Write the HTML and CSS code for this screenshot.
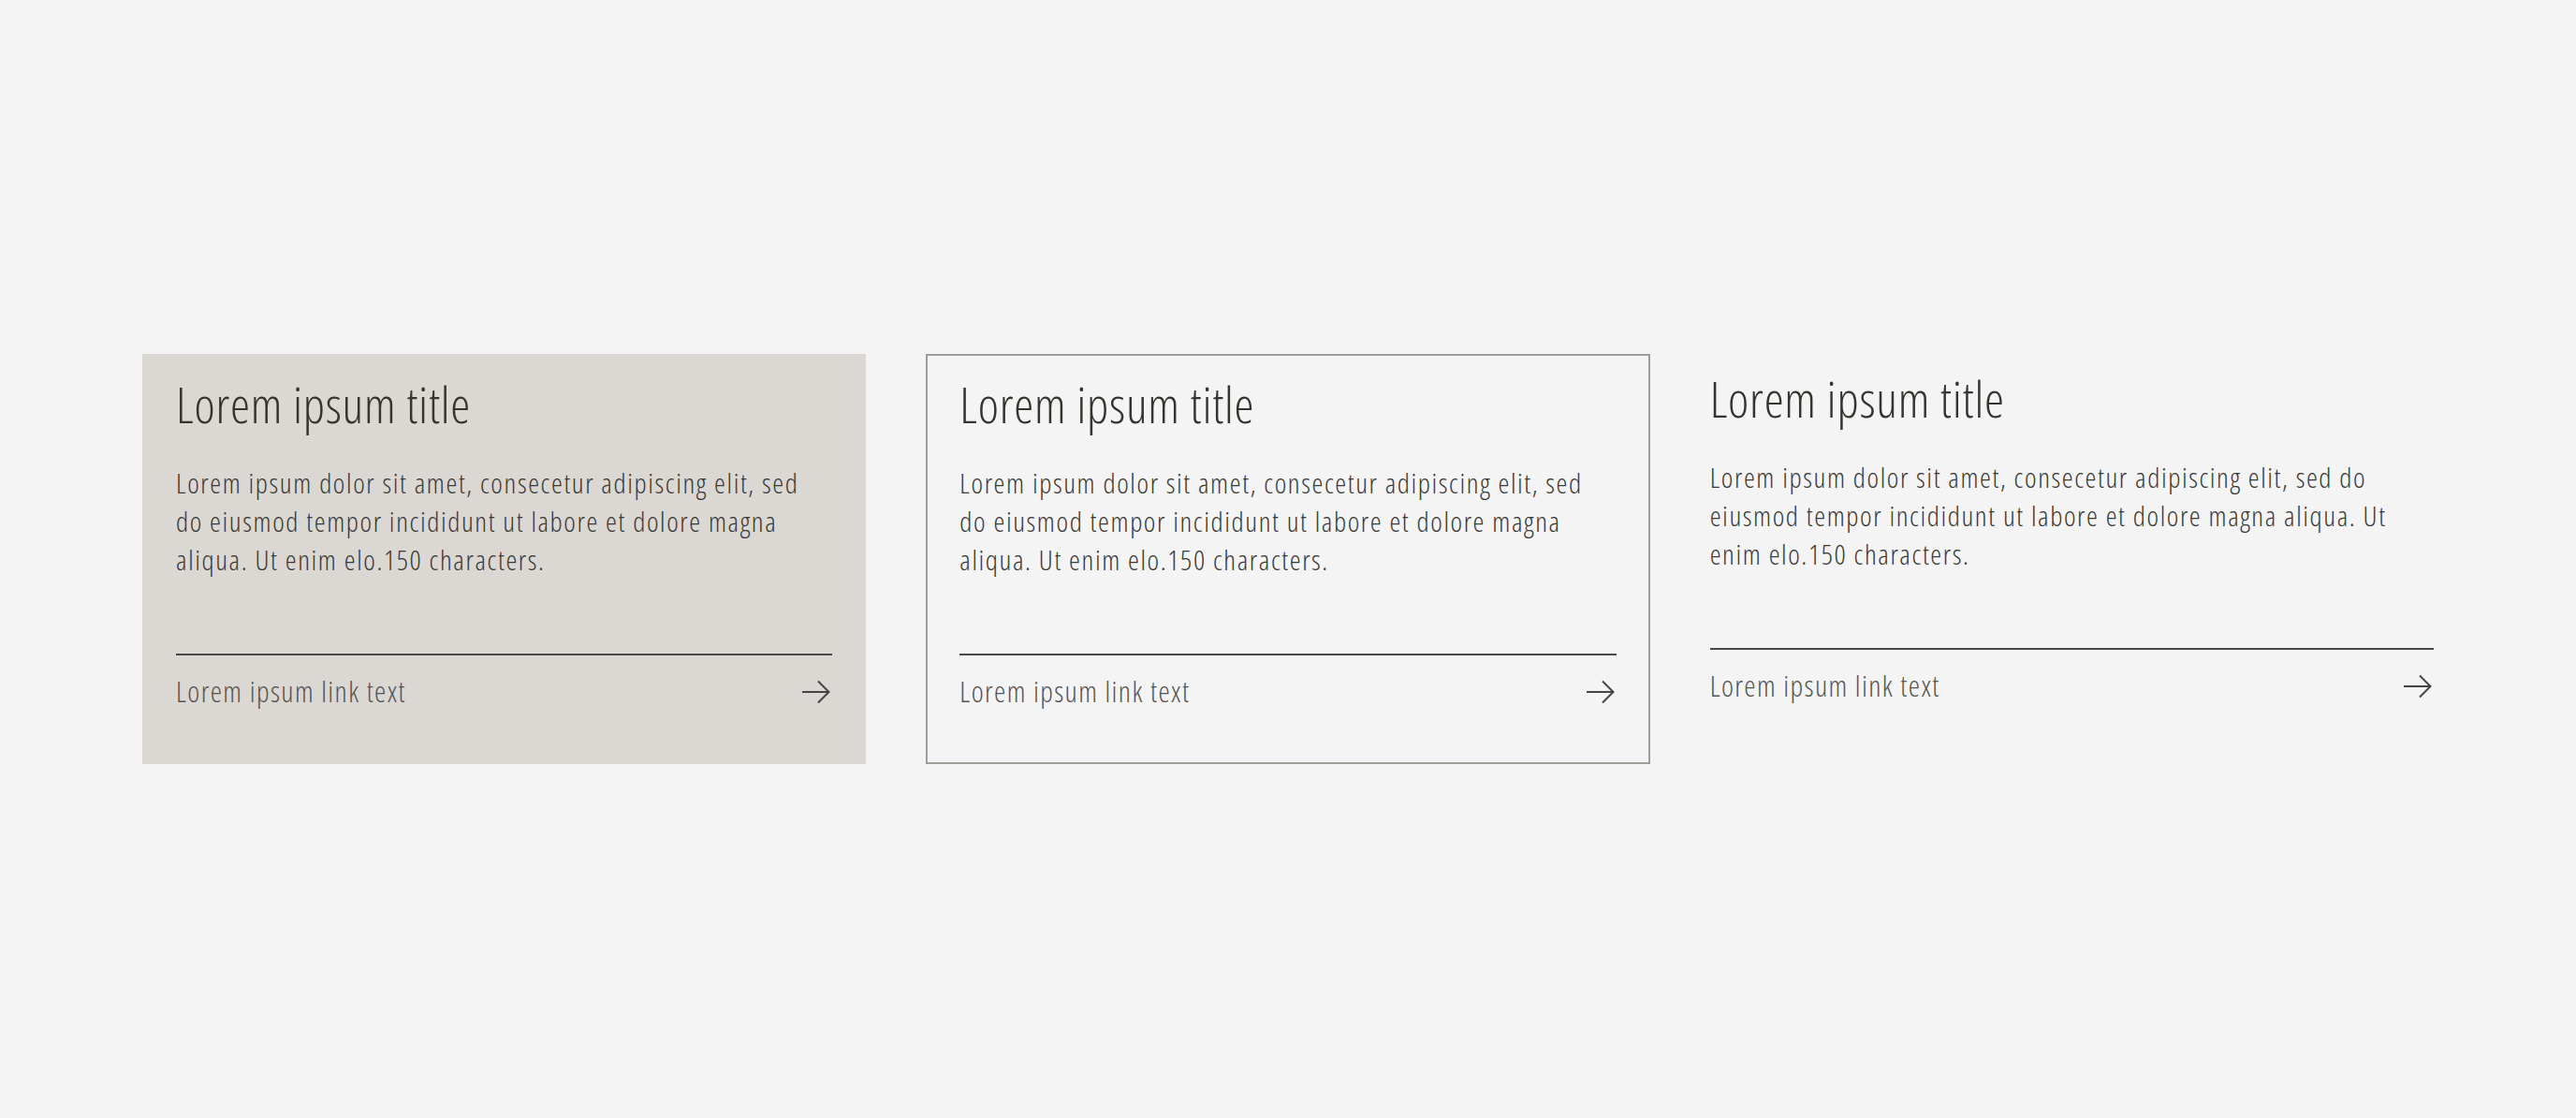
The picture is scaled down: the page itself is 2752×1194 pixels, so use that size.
FILE: index.html
```html
<!DOCTYPE html>
<html lang="en">
<head>
    <meta charset="UTF-8">
    <meta name="viewport" content="width=device-width, initial-scale=1.0">
    <title>Teaser Cards</title>
    <link rel="stylesheet" href="styles.css">
</head>
<body>
    <main class="cards">
        <!-- filled card -->
        <article class="card card-filled">
            <h2 class="card-title">Lorem ipsum title</h2>
            <p class="card-text">Lorem ipsum dolor sit amet, consecetur adipiscing elit, sed do eiusmod tempor incididunt ut labore et dolore magna aliqua. Ut enim elo.150 characters.</p>
            <a class="card-link" href="#">
                <span>Lorem ipsum link text</span>
                <svg class="arrow" width="32" height="28" viewBox="0 0 32 28"><path d="M0 14H28M17 2.5L28.5 14L17 25.5" fill="none" stroke="#444" stroke-width="2"/></svg>
            </a>
        </article>

        <!-- outlined card -->
        <article class="card card-outline">
            <h2 class="card-title">Lorem ipsum title</h2>
            <p class="card-text">Lorem ipsum dolor sit amet, consecetur adipiscing elit, sed do eiusmod tempor incididunt ut labore et dolore magna aliqua. Ut enim elo.150 characters.</p>
            <a class="card-link" href="#">
                <span>Lorem ipsum link text</span>
                <svg class="arrow" width="32" height="28" viewBox="0 0 32 28"><path d="M0 14H28M17 2.5L28.5 14L17 25.5" fill="none" stroke="#444" stroke-width="2"/></svg>
            </a>
        </article>

        <!-- plain card -->
        <article class="card card-plain">
            <h2 class="card-title">Lorem ipsum title</h2>
            <p class="card-text">Lorem ipsum dolor sit amet, consecetur adipiscing elit, sed do eiusmod tempor incididunt ut labore et dolore magna aliqua. Ut enim elo.150 characters.</p>
            <a class="card-link" href="#">
                <span>Lorem ipsum link text</span>
                <svg class="arrow" width="32" height="28" viewBox="0 0 32 28"><path d="M0 14H28M17 2.5L28.5 14L17 25.5" fill="none" stroke="#444" stroke-width="2"/></svg>
            </a>
        </article>
    </main>
</body>
</html>
```

FILE: styles.css
```css
html, body {
    height: 100%;
}
body {
    margin: 0;
    background-color: #f4f4f4;
    font-family: "Open Sans", sans-serif;
    font-stretch: 75%;
    font-weight: 300;
    color: #3b3936;
    display: flex;
    align-items: center;
    justify-content: center;
}
.cards {
    width: 2448px;
    display: grid;
    grid-template-columns: repeat(3, 1fr);
    gap: 64px;
    align-items: start;
}
.card {
    box-sizing: border-box;
    height: 438px;
    padding: 23px 36px 0;
    display: flex;
    flex-direction: column;
}
.card-filled {
    background-color: #dbd8d4;
}
.card-outline {
    border: 2px solid #a09d98;
    padding: 21px 34px 0;
}
.card-plain {
    padding: 17px 0 0;
}
.card-title {
    margin: 0;
    font-size: 53px;
    line-height: 62px;
    font-weight: 300;
    letter-spacing: 0.8px;
    color: #36342f;
}
.card-text {
    margin: 32px 0 0;
    font-size: 30px;
    line-height: 41px;
    letter-spacing: 1.6px;
}
.card-link {
    margin-top: 80px;
    border-top: 2px solid #474747;
    padding-top: 18px;
    display: flex;
    justify-content: space-between;
    align-items: center;
    font-size: 31px;
    line-height: 41px;
    letter-spacing: 1.4px;
    color: #55534f;
    text-decoration: none;
}
```
